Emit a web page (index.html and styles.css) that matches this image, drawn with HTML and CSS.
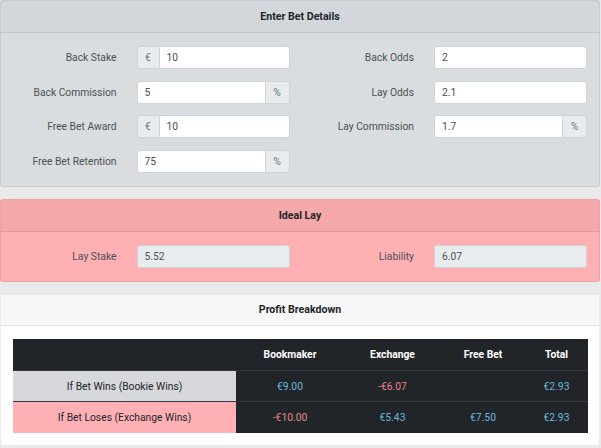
FILE: index.html
```html
<!DOCTYPE html>
<html lang="en">
<head>
    <meta charset="UTF-8">
    <title>Matched Bet Calculator</title>
    <link rel="stylesheet" href="styles.css">
</head>
<body>
    <!-- Inputs -->
    <section class="card card-grey">
        <div class="card-header">Enter Bet Details</div>
        <div class="card-body">
            <div class="fields">
                <div class="field-col">
                    <div class="field">
                        <label>Back Stake</label>
                        <div class="input-group">
                            <span class="addon addon-left">€</span>
                            <input type="text" class="joined-left" value="10">
                        </div>
                    </div>
                    <div class="field">
                        <label>Back Commission</label>
                        <div class="input-group">
                            <input type="text" class="joined-right" value="5">
                            <span class="addon addon-right">%</span>
                        </div>
                    </div>
                    <div class="field">
                        <label>Free Bet Award</label>
                        <div class="input-group">
                            <span class="addon addon-left">€</span>
                            <input type="text" class="joined-left" value="10">
                        </div>
                    </div>
                    <div class="field">
                        <label>Free Bet Retention</label>
                        <div class="input-group">
                            <input type="text" class="joined-right" value="75">
                            <span class="addon addon-right">%</span>
                        </div>
                    </div>
                </div>
                <div class="field-col">
                    <div class="field">
                        <label>Back Odds</label>
                        <input type="text" value="2">
                    </div>
                    <div class="field">
                        <label>Lay Odds</label>
                        <input type="text" value="2.1">
                    </div>
                    <div class="field">
                        <label>Lay Commission</label>
                        <div class="input-group">
                            <input type="text" class="joined-right" value="1.7">
                            <span class="addon addon-right">%</span>
                        </div>
                    </div>
                </div>
            </div>
        </div>
    </section>

    <!-- Result -->
    <section class="card card-red">
        <div class="card-header">Ideal Lay</div>
        <div class="card-body">
            <div class="fields">
                <div class="field-col">
                    <div class="field">
                        <label>Lay Stake</label>
                        <input type="text" value="5.52" readonly>
                    </div>
                </div>
                <div class="field-col">
                    <div class="field">
                        <label>Liability</label>
                        <input type="text" value="6.07" readonly>
                    </div>
                </div>
            </div>
        </div>
    </section>

    <!-- Breakdown -->
    <section class="card card-white">
        <div class="card-header">Profit Breakdown</div>
        <div class="card-body table-body">
            <table class="breakdown">
                <colgroup>
                    <col style="width: 223px">
                    <col style="width: 108px">
                    <col style="width: 97px">
                    <col style="width: 84px">
                    <col style="width: 63px">
                </colgroup>
                <thead>
                    <tr>
                        <th></th>
                        <th>Bookmaker</th>
                        <th>Exchange</th>
                        <th>Free Bet</th>
                        <th>Total</th>
                    </tr>
                </thead>
                <tbody>
                    <tr>
                        <td class="label-win">If Bet Wins (Bookie Wins)</td>
                        <td class="pos">€9.00</td>
                        <td class="neg">-€6.07</td>
                        <td></td>
                        <td class="pos">€2.93</td>
                    </tr>
                    <tr>
                        <td class="label-lose">If Bet Loses (Exchange Wins)</td>
                        <td class="neg">-€10.00</td>
                        <td class="pos">€5.43</td>
                        <td class="pos">€7.50</td>
                        <td class="pos">€2.93</td>
                    </tr>
                </tbody>
            </table>
        </div>
    </section>
</body>
</html>
```

FILE: styles.css
```css
* {
    margin: 0;
    padding: 0;
    box-sizing: border-box;
}

body {
    font-family: 'Roboto', sans-serif;
    font-size: 10.3px;
    background-color: #e9e9e9;
    color: #212529;
}

/* Cards */
.card {
    border: 1px solid rgba(0, 0, 0, 0.08);
    border-radius: 3px;
    margin: 0 1px 12px 0;
    overflow: hidden;
}

.card-header {
    height: 32px;
    display: flex;
    align-items: center;
    justify-content: center;
    font-weight: bold;
    font-size: 10.6px;
    border-bottom: 1px solid rgba(0, 0, 0, 0.08);
}

.card-body {
    padding: 13px 0;
}

.card-grey { background-color: #dadde0; }
.card-grey .card-header { background-color: #d3d6da; }

.card-red { background-color: #ffb0b3; }
.card-red .card-header { background-color: #f5a8aa; }

.card-white { background-color: #fff; }
.card-white .card-header { background-color: #f7f7f7; height: 31px; }

/* Form fields */
.fields {
    display: grid;
    grid-template-columns: 1fr 1fr;
    margin-right: 3px;
}

.field-col {
    display: flex;
    flex-direction: column;
    gap: 11.5px;
    padding-right: 9px;
}

.field {
    display: grid;
    grid-template-columns: 1fr 153px;
    column-gap: 20px;
    align-items: center;
    height: 23px;
}

.field label {
    text-align: right;
    color: #495057;
}

input {
    font: inherit;
    color: #495057;
    width: 100%;
    height: 23px;
    padding: 0 7px;
    background-color: #fff;
    border: 1px solid #ced4da;
    border-radius: 3px;
    outline: none;
}

input[readonly] {
    background-color: #e9ecef;
}

.input-group {
    display: flex;
    height: 23px;
}

.input-group input {
    flex: 1;
    min-width: 0;
}

.joined-left { border-radius: 0 3px 3px 0; }
.joined-right { border-radius: 3px 0 0 3px; }

.addon {
    display: flex;
    align-items: center;
    justify-content: center;
    background-color: #e9ecef;
    border: 1px solid #ced4da;
    color: #6c757d;
}

.addon-left {
    width: 22px;
    border-right: none;
    border-radius: 3px 0 0 3px;
}

.addon-right {
    width: 24px;
    border-left: none;
    border-radius: 0 3px 3px 0;
}

/* Profit table */
.table-body {
    padding: 13px 11px 12px 12px;
}

.breakdown {
    width: 100%;
    table-layout: fixed;
    border-collapse: collapse;
    background-color: #212529;
    color: #fff;
    text-align: center;
}

.breakdown th {
    height: 32px;
    font-weight: bold;
}

.breakdown td {
    height: 31px;
    border-top: 1px solid #32383e;
}

.label-win {
    background-color: #d6d8db;
    color: #212529;
}

.label-lose {
    background-color: #ffb0b5;
    color: #212529;
}

.pos { color: #6ab7d9; }
.neg { color: #e5878c; }
```
